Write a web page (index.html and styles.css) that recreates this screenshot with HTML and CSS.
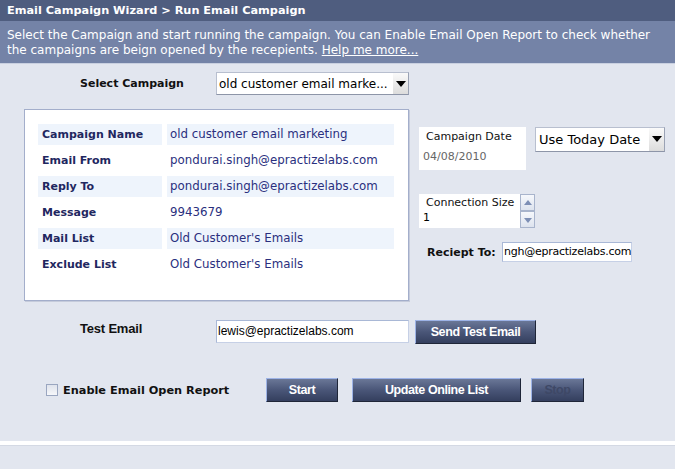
FILE: index.html
```html
<!DOCTYPE html>
<html lang="en">
<head>
  <meta charset="UTF-8" />
  <title>Email Campaign Wizard - Run Email Campaign</title>
  <link rel="stylesheet" href="styles.css">
</head>
<body>
  <div class="title">Email Campaign Wizard &gt; Run Email Campaign</div>
  <div class="desc">
    Select the Campaign and start running the campaign. You can Enable Email Open Report to check whether<br>
    the campaigns are beign opened by the recepients. <a href="#">Help me more...</a>
  </div>

  <div class="content">
    <div class="row-select">
      <div class="field-label">Select Campaign</div>
      <div class="select select-campaign">
        <span class="select-text">old customer email marke...</span>
        <span class="arrow"></span>
      </div>
    </div>

    <div class="row-main">
      <div class="panel">
        <div class="cell shade label">Campaign Name</div>
        <div class="cell shade">old customer email marketing</div>
        <div class="cell label">Email From</div>
        <div class="cell">pondurai.singh@epractizelabs.com</div>
        <div class="cell shade label">Reply To</div>
        <div class="cell shade">pondurai.singh@epractizelabs.com</div>
        <div class="cell label">Message</div>
        <div class="cell">9943679</div>
        <div class="cell shade label">Mail List</div>
        <div class="cell shade">Old Customer's Emails</div>
        <div class="cell label">Exclude List</div>
        <div class="cell">Old Customer's Emails</div>
      </div>

      <div class="side">
        <div class="date-row">
          <div class="date-box">
            <div class="box-title">Campaign Date</div>
            <div class="date-value">04/08/2010</div>
          </div>
          <div class="select select-date">
            <span class="select-text">Use Today Date</span>
            <span class="arrow"></span>
          </div>
        </div>

        <div class="conn-row">
          <div class="conn-box">
            <div class="box-title">Connection Size</div>
            <div class="conn-value">1</div>
          </div>
          <div class="spinner">
            <span class="spin up"></span>
            <span class="spin down"></span>
          </div>
        </div>

        <div class="receipt-row">
          <span class="receipt-label">Reciept To:</span>
          <div class="text-input receipt-input">ngh@epractizelabs.com</div>
        </div>
      </div>
    </div>

    <div class="row-test">
      <div class="field-label narrow">Test Email</div>
      <div class="text-input test-input">lewis@epractizelabs.com</div>
      <button class="btn btn-send">Send Test Email</button>
    </div>

    <div class="row-actions">
      <label class="check"><span class="checkbox"></span>Enable Email Open Report</label>
      <button class="btn btn-start">Start</button>
      <button class="btn btn-update">Update Online List</button>
      <button class="btn btn-stop">Stop</button>
    </div>
  </div>

  <div class="strip"></div>
</body>
</html>
```

FILE: styles.css
```css
* {
  box-sizing: border-box;
  margin: 0;
  padding: 0;
}

body {
  font-family: "DejaVu Sans", Verdana, sans-serif;
  font-size: 11px;
  background-color: #e2e6ef;
  min-height: 100vh;
}

/* Header */
.title {
  height: 21px;
  background-color: #4f5d7f;
  color: #fff;
  font-weight: bold;
  font-size: 11.3px;
  line-height: 22px;
  padding-left: 7px;
}

.desc {
  height: 43px;
  background-color: #7483a7;
  color: #fff;
  font-size: 12px;
  line-height: 15px;
  padding: 7px 7px 0;
  white-space: nowrap;
  border-bottom: 1px solid #c9d0e0;
}

.desc a {
  color: #fff;
}

/* Main content */
.content {
  padding-left: 24px;
}

.row-select {
  display: flex;
  align-items: center;
  margin-top: 8px;
}

.field-label {
  width: 192px;
  padding-left: 56px;
  font-weight: bold;
  color: #111;
}

.select {
  display: flex;
  align-items: center;
  background: #fff;
  border: 1px solid #b8bfcf;
  border-right-color: #9aa2b4;
  border-bottom-color: #8d95a8;
  font-size: 12.5px;
  color: #000;
}

.select-text {
  flex: 1;
  padding-left: 2px;
  white-space: nowrap;
  overflow: hidden;
}

.arrow {
  width: 15px;
  align-self: stretch;
  background: linear-gradient(#fafafa, #dcdcdc);
  position: relative;
}

.arrow::after {
  content: "";
  position: absolute;
  left: 3px;
  top: 8px;
  border-left: 5px solid transparent;
  border-right: 5px solid transparent;
  border-top: 6px solid #000;
}

.select-campaign {
  width: 193px;
  height: 23px;
  font-size: 12px;
}

.row-main {
  display: flex;
  margin-top: 14px;
}

.panel {
  width: 385px;
  height: 192px;
  background: #fff;
  border: 1px solid #a3aecb;
  box-shadow: 1px 1px 0 #c5cbdb;
  padding: 14px 0 0 13px;
  display: grid;
  grid-template-columns: 124px 227px;
  grid-auto-rows: 21px;
  column-gap: 5px;
  row-gap: 5px;
  align-content: start;
}

.cell {
  line-height: 21px;
  padding-left: 3px;
  color: #2a2f7e;
  font-size: 11.8px;
  white-space: nowrap;
}

.cell.label {
  padding-left: 4px;
  font-size: 11px;
  font-weight: bold;
  color: #1f2760;
}

.shade {
  background-color: #eef4fc;
}

/* Side column */
.side {
  margin-left: 10px;
  padding-top: 18px;
}

.date-row {
  display: flex;
  align-items: flex-start;
}

.date-box {
  width: 107px;
  height: 43px;
  background: #fff;
  padding: 2px 0 0 7px;
}

.box-title {
  color: #111;
  font-size: 11px;
  line-height: 15px;
}

.date-value {
  color: #666;
  margin-top: 6px;
  margin-left: -3px;
}

.select-date {
  margin-left: 9px;
  width: 130px;
  height: 25px;
  font-size: 13px;
}

.select-date .select-text {
  padding-left: 3px;
}

.conn-row {
  display: flex;
  margin-top: 24px;
}

.conn-box {
  width: 101px;
  height: 34px;
  background: #fff;
  padding: 1px 0 0 7px;
}

.conn-value {
  margin-left: -3px;
  line-height: 15px;
  color: #000;
}

.spinner {
  display: flex;
  flex-direction: column;
}

.spin {
  width: 15px;
  height: 17px;
  background: linear-gradient(#f6f8fc, #dde3ee);
  border: 1px solid #a8b4cc;
  position: relative;
}

.spin::after {
  content: "";
  position: absolute;
  left: 3px;
  border-left: 4px solid transparent;
  border-right: 4px solid transparent;
}

.spin.up::after {
  top: 5px;
  border-bottom: 5px solid #7d8fb5;
}

.spin.down::after {
  top: 6px;
  border-top: 5px solid #7d8fb5;
}

.receipt-row {
  display: flex;
  align-items: center;
  margin-top: 14px;
  padding-left: 8px;
}

.receipt-label {
  width: 75px;
  font-weight: bold;
  font-size: 11px;
  white-space: nowrap;
  color: #111;
}

.text-input {
  background: #fff;
  border: 1px solid #7f9db9;
  border-color: #a9b8d6 #c6d0e6 #c6d0e6 #a9b8d6;
  font-size: 12px;
  white-space: nowrap;
  overflow: hidden;
  color: #000;
}

.receipt-input {
  width: 130px;
  height: 20px;
  line-height: 18px;
  padding-left: 1px;
  font-size: 11px;
  letter-spacing: -0.25px;
}

/* Test email */
.row-test {
  display: flex;
  align-items: flex-start;
  margin-top: 19px;
}

.narrow {
  font-family: "Liberation Sans Narrow", "Liberation Sans", Arial, sans-serif;
  font-size: 13px;
  letter-spacing: -0.2px;
  padding-top: 1px;
}

.test-input {
  width: 193px;
  height: 23px;
  line-height: 21px;
  padding-left: 1px;
  font-family: "Liberation Sans", Arial, sans-serif;
  font-size: 12px;
}

.btn {
  height: 24px;
  font-family: "Liberation Sans Narrow", "Liberation Sans", Arial, sans-serif;
  font-weight: bold;
  font-size: 12.5px;
  letter-spacing: -0.4px;
  color: #fff;
  background: linear-gradient(#6a7797, #4a5678 50%, #343f5e);
  border: 1px solid;
  border-color: #9db3e6 #1f2638 #1f2638 #9db3e6;
  cursor: pointer;
}

.btn-send {
  width: 121px;
  margin-left: 6px;
}

/* Actions */
.row-actions {
  display: flex;
  align-items: center;
  margin-top: 34px;
  padding-left: 22px;
}

.check {
  display: flex;
  align-items: center;
  font-weight: bold;
  font-size: 11.3px;
  white-space: nowrap;
  color: #111;
  width: 220px;
}

.checkbox {
  width: 12px;
  height: 12px;
  border: 1px solid #9aa6c0;
  background: linear-gradient(#dfe3ec, #f6f7fa);
  margin-right: 5px;
}

.btn-start {
  width: 72px;
}

.btn-update {
  width: 169px;
  margin-left: 14px;
}

.btn-stop {
  width: 53px;
  margin-left: 10px;
  color: #3e4866;
}

.strip {
  height: 5px;
  background: #fff;
  margin-top: 39px;
  border-bottom: 1px solid #d4d9e4;
}
```
